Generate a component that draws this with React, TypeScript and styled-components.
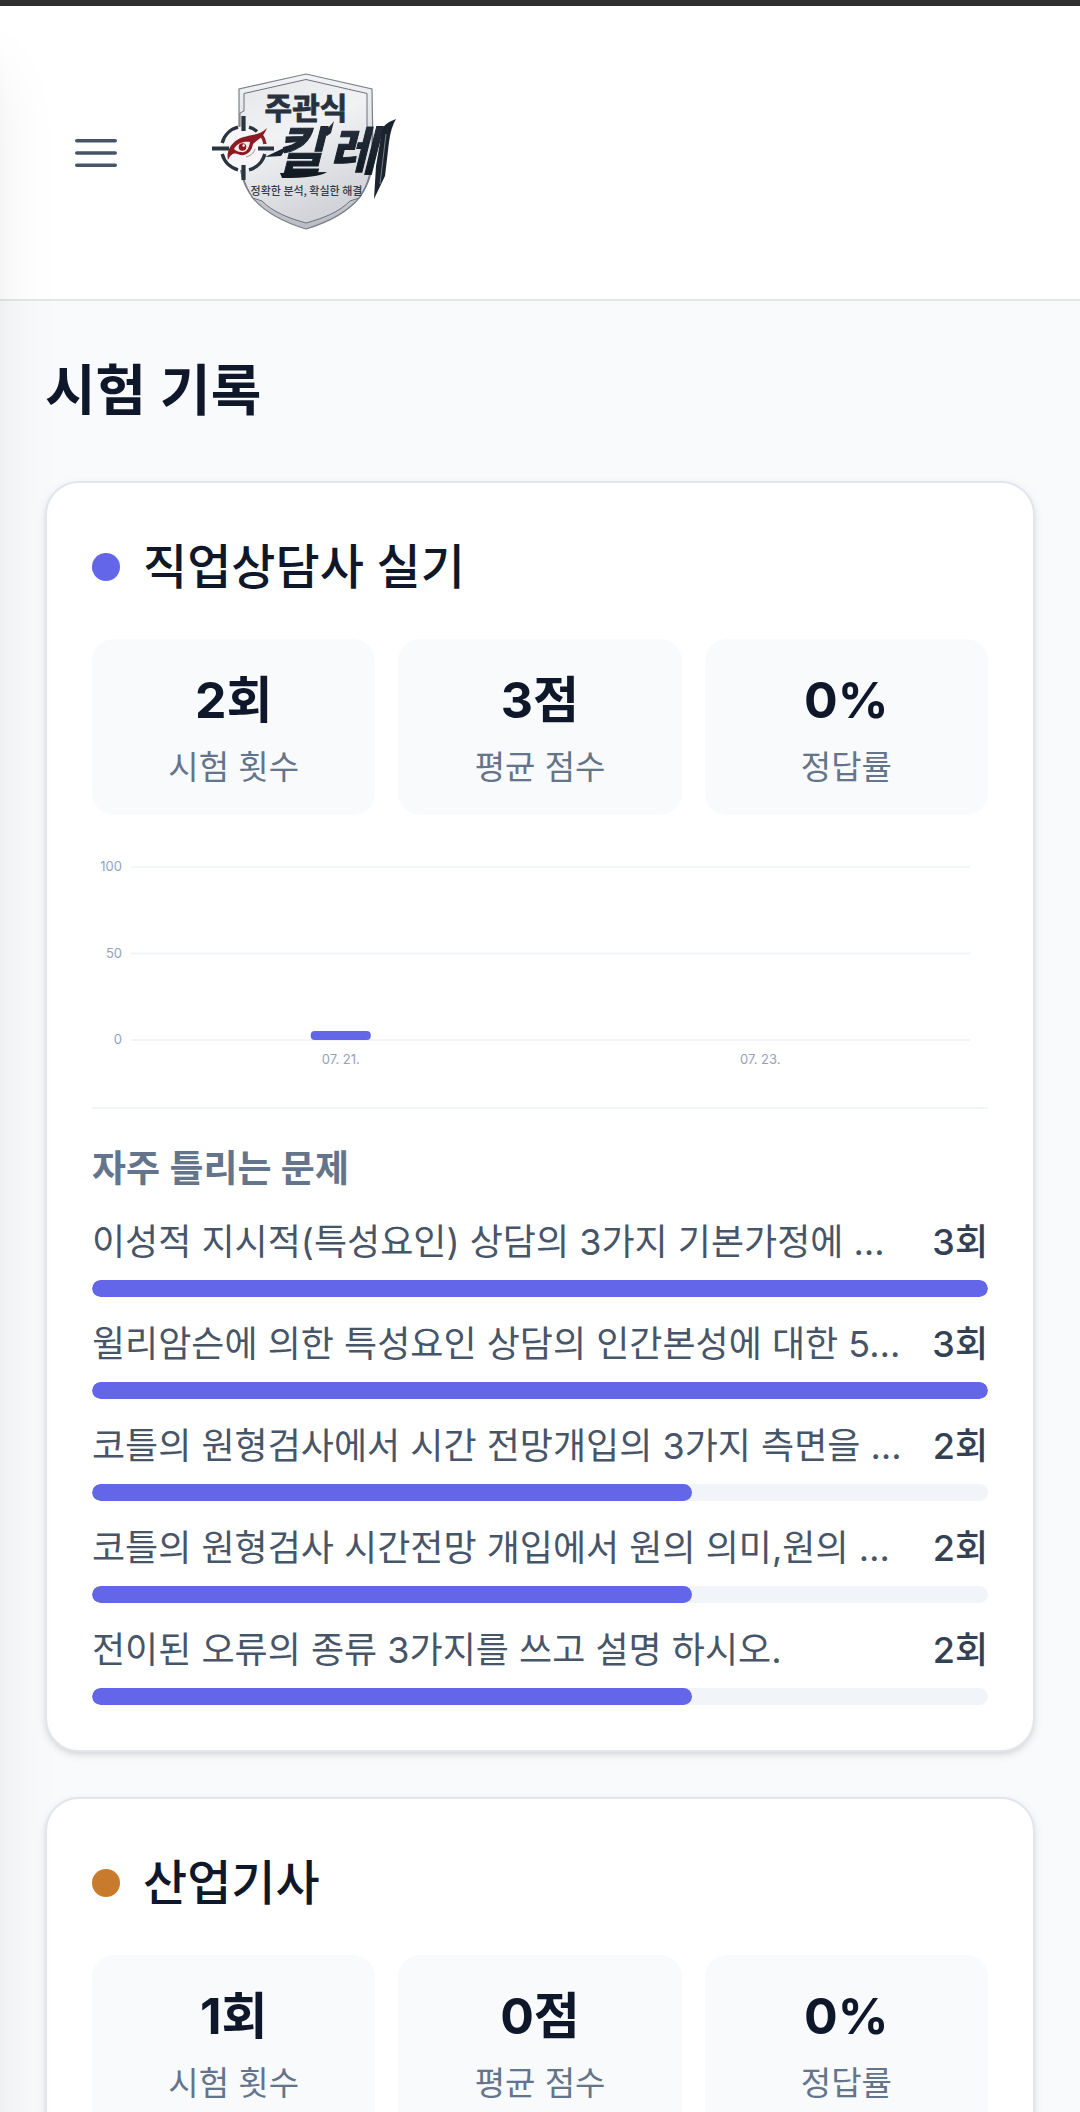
import React from "react";
import styled, { createGlobalStyle } from "styled-components";

const fontStack = `Inter, "Noto Sans CJK KR", sans-serif`;

const GlobalStyle = createGlobalStyle`
  *, *::before, *::after { box-sizing: border-box; }
  body {
    margin: 0;
    background: #f8fafc;
    color: #0f172a;
    font-family: ${fontStack};
  }
  h1, h2, h3, p, dl, dd, ul { margin: 0; padding: 0; }
`;

const Shell = styled.div`
  display: flex;
  flex-direction: column;
  height: 100vh;
  border-top: 6px solid #303030;
  overflow: hidden;
`;

const Drawer = styled.aside`
  position: fixed;
  top: 6px;
  bottom: -200px;
  left: 0;
  width: 720px;
  background: #ffffff;
  transform: translateX(-100%);
  box-shadow: 0 56px 70px -14px rgba(0, 0, 0, 0.1), 0 22px 28px -17px rgba(0, 0, 0, 0.1);
  z-index: 10;
  pointer-events: none;
`;

const Header = styled.header`
  display: flex;
  flex: none;
  align-items: center;
  gap: 22px;
  padding: 34px 45px;
  background: #ffffff;
  border-bottom: 2px solid #e2e6ea;
`;

const MenuButton = styled.button`
  display: flex;
  padding: 23px;
  border: 0;
  border-radius: 22px;
  background: transparent;
  color: #475569;
  cursor: pointer;
`;

const LogoLink = styled.a`
  display: block;
  width: 270px;
  height: 225px;
`;

const Main = styled.main`
  flex: 1;
  min-height: 0;
  padding: 45px;
  overflow-y: auto;
  scrollbar-width: none;
`;

const PageTitle = styled.h1`
  margin-bottom: 47px;
  font-size: 55px;
  line-height: 88px;
  font-weight: 600;
`;

const CardList = styled.div`
  display: flex;
  flex-direction: column;
  gap: 45px;
`;

const Card = styled.section`
  padding: 45px;
  background: #ffffff;
  border: 2px solid #e2e6ec;
  border-radius: 34px;
  box-shadow: 0 3px 8px rgba(0, 0, 0, 0.1), 0 3px 6px -3px rgba(0, 0, 0, 0.1);
`;

const CardHeader = styled.div`
  display: flex;
  align-items: center;
  gap: 23px;
  margin-bottom: 34px;
`;

const Dot = styled.span<{ $color: string }>`
  width: 28px;
  height: 28px;
  border-radius: 50%;
  background: ${(p) => p.$color};
`;

const CardTitle = styled.h2`
  font-size: 48px;
  line-height: 77px;
  font-weight: 500;
`;

const StatGrid = styled.dl`
  display: grid;
  grid-template-columns: repeat(3, 1fr);
  gap: 23px;
`;

const Stat = styled.div`
  display: flex;
  flex-direction: column-reverse;
  padding: 23px 23px 19px;
  border-radius: 22px;
  background: #f8fafc;
  text-align: center;
`;

const StatValue = styled.dd`
  font-size: 50px;
  line-height: 76px;
  font-weight: 700;
`;

const StatLabel = styled.dt`
  font-size: 33px;
  line-height: 58px;
  color: #64748b;
`;

const ChartBox = styled.div`
  margin: 23px 0;
  svg { display: block; width: 100%; height: auto; }
  text { font-family: ${fontStack}; font-size: 13px; fill: #94a3b8; }
`;

const Frequent = styled.div`
  padding-top: 30px;
  border-top: 2px solid #f1f5f9;
`;

const FrequentTitle = styled.h3`
  margin-bottom: 13px;
  font-size: 37px;
  line-height: 60px;
  font-weight: 600;
  color: #64748b;
`;

const QuestionList = styled.ul`
  display: flex;
  flex-direction: column;
  gap: 17px;
  list-style: none;
`;

const QuestionRow = styled.div`
  display: flex;
  justify-content: space-between;
  gap: 23px;
  margin-bottom: 8px;
  font-size: 36px;
  line-height: 60px;
`;

const QuestionText = styled.span`
  min-width: 0;
  overflow: hidden;
  text-overflow: ellipsis;
  white-space: nowrap;
  color: #475569;
`;

const QuestionCount = styled.span`
  flex: none;
  font-weight: 500;
  color: #334155;
`;

const Track = styled.div`
  height: 17px;
  border-radius: 9px;
  background: #f1f5f9;
  overflow: hidden;
`;

const Fill = styled.div`
  height: 100%;
  border-radius: 9px;
  background: #6366e8;
`;

function MenuIcon() {
  return (
    <svg width="56" height="56" viewBox="0 0 24 24" fill="none" stroke="currentColor" strokeWidth="1.5" strokeLinecap="round" aria-hidden="true">
      <path d="M3.75 6.75h16.5M3.75 12h16.5M3.75 17.25h16.5" />
    </svg>
  );
}

function Logo() {
  return (
    <svg width="270" height="225" viewBox="169 40 270 225" role="img" aria-label="주관식 킬레">
      <defs>
        <linearGradient id="shieldFace" x1="0" y1="0" x2="0.4" y2="1">
          <stop offset="0" stopColor="#e6e7ea" />
          <stop offset="0.45" stopColor="#f1f2f4" />
          <stop offset="1" stopColor="#d2d4d9" />
        </linearGradient>
        <linearGradient id="shieldRim" x1="0" y1="0" x2="0" y2="1">
          <stop offset="0" stopColor="#f3f4f6" />
          <stop offset="1" stopColor="#b9bcc2" />
        </linearGradient>
        <linearGradient id="ink" x1="0" y1="0" x2="0" y2="1">
          <stop offset="0" stopColor="#2b3542" />
          <stop offset="1" stopColor="#0d141d" />
        </linearGradient>
      </defs>
      <path d="M306 74L372 89L373 150C373 172 369 184 360 197C347 213 329 222 306 229C283 222 265 213 252 197C243 184 239 172 239 150V89Z" fill="url(#shieldRim)" stroke="#7b8088" strokeWidth="1.2" />
      <path d="M306 79.500L367 93.500V127H372V150C372 172 368 184 359 198L350 201C339 212 324 218 306 223C288 218 273 212 262 201L253 198C244 184 240 172 240 150V113L244 111V93.500Z" fill="url(#shieldFace)" stroke="#6d727b" strokeWidth="1" />
      <circle cx="243.500" cy="148.500" r="22" fill="#f6f6f8" />
      <g fill="none" stroke="#2a343f" strokeWidth="3.400">
        <path d="M238 127.200A22 22 0 0 0 222.200 143" />
        <path d="M222.200 154A22 22 0 0 0 238 169.800" />
        <path d="M249 169.800A22 22 0 0 0 264.800 154" />
        <path d="M249 127.200A22 22 0 0 1 257 131.500" />
        <path d="M261 134.500A22 22 0 0 1 265 144" stroke="#8e2027" />
      </g>
      <path d="M243.500 116V131M243.500 165V180M212 148.500H229M258 148.500H274" stroke="#2a343f" strokeWidth="4.200" />
      <path d="M267 128C263 138 257 140 253 144C252 151 247 156 240 155C235 153 232 152 228 160C226 151 231 144 237 140C246 134 259 137 267 128Z" fill="#8d1a22" />
      <path d="M234 149C237 143 244 141 250 142C249 149 246 153 241 152C238 152 235 150 234 149Z" fill="#f6e9e9" />
      <circle cx="242.500" cy="147" r="3.800" fill="#8d1a22" />
      <circle cx="243.700" cy="145.500" r="1.200" fill="#ffffff" />
      <path d="M246 157C250 156 254 153 255 149" fill="none" stroke="#9b6a6e" strokeWidth="0.800" />
      <text x="306" y="119" textAnchor="middle" fontFamily="Noto Sans CJK KR, sans-serif" fontSize="30" fontWeight="700" fill="#28323e" stroke="#28323e" strokeWidth="0.800">주관식</text>
      <text x="275 329" y="170" fontFamily="Noto Sans CJK KR, sans-serif" fontSize="52" fontWeight="700" fontStyle="italic" fill="url(#ink)" stroke="#19222d" strokeWidth="1">킬레</text>
      <path d="M396 119C388 122 384 125 382 130L376 166L374 199L385 176L389 142Q391 127 396 119Z" fill="#1a232e" />
      <path d="M386 134L380 184" stroke="#8d949d" strokeWidth="0.800" />
      <path d="M334 121C330 127 327 129 321 131L327 136L331 133Z" fill="#1f2935" />
      <path d="M288 146L265 157L281 156Z" fill="#1a232e" />
      <path d="M280 173L327 172Q318 178 282 178Z" fill="#111922" />
      <text x="306.500" y="195" textAnchor="middle" fontFamily="Noto Sans CJK KR, sans-serif" fontSize="11" fontWeight="500" fill="#333b46">정확한 분석, 확실한 해결</text>
    </svg>
  );
}

type Score = { date: string; score: number };
type Question = { text: string; count: number };

function ScoreChart({ scores }: { scores: Score[] }) {
  const left = 39;
  const right = 878;
  const base = 202;
  const span = 173;
  const slot = (right - left) / scores.length;
  return (
    <ChartBox>
      <svg viewBox="0 0 896 246" role="img" aria-label="시험 점수">
        {[100, 50, 0].map((v) => {
          const y = base - (v / 100) * span;
          return (
            <g key={v}>
              <line x1={left} x2={right} y1={y} y2={y} stroke="#f1f5f9" strokeWidth="2" />
              <text x={left - 9} y={y + 4} textAnchor="end">{v}</text>
            </g>
          );
        })}
        {scores.map((s, i) => {
          const cx = left + slot * (i + 0.5);
          const h = s.score > 0 ? Math.max(9, (s.score / 100) * span) : 0;
          return (
            <g key={s.date}>
              {h > 0 && <rect x={cx - 30} y={base - h} width="60" height={h} rx="4" fill="#6366e8" />}
              <text x={cx} y={base + 24} textAnchor="middle">{s.date}</text>
            </g>
          );
        })}
      </svg>
    </ChartBox>
  );
}

function FrequentMistakes({ questions }: { questions: Question[] }) {
  return (
    <Frequent>
      <FrequentTitle>자주 틀리는 문제</FrequentTitle>
      <QuestionList>
        {questions.map((q) => (
          <li key={q.text}>
            <QuestionRow>
              <QuestionText>{q.text}</QuestionText>
              <QuestionCount>{q.count}회</QuestionCount>
            </QuestionRow>
            <Track>
              <Fill style={{ width: `${Math.round((q.count / 3) * 100)}%` }} />
            </Track>
          </li>
        ))}
      </QuestionList>
    </Frequent>
  );
}

type Subject = {
  name: string;
  color: string;
  stats: [string, string][];
  scores?: Score[];
  questions?: Question[];
};

const subjects: Subject[] = [
  {
    name: "직업상담사 실기",
    color: "#6366e8",
    stats: [["시험 횟수", "2회"], ["평균 점수", "3점"], ["정답률", "0%"]],
    scores: [{ date: "07. 21.", score: 5 }, { date: "07. 23.", score: 0 }],
    questions: [
      { text: "이성적 지시적(특성요인) 상담의 3가지 기본가정에 …", count: 3 },
      { text: "윌리암슨에 의한 특성요인 상담의 인간본성에 대한 5…", count: 3 },
      { text: "코틀의 원형검사에서 시간 전망개입의 3가지 측면을 …", count: 2 },
      { text: "코틀의 원형검사 시간전망 개입에서 원의 의미,원의 …", count: 2 },
      { text: "전이된 오류의 종류 3가지를 쓰고 설명 하시오.", count: 2 },
    ],
  },
  {
    name: "산업기사",
    color: "#c97b2d",
    stats: [["시험 횟수", "1회"], ["평균 점수", "0점"], ["정답률", "0%"]],
  },
];

export default function App() {
  return (
    <>
      <GlobalStyle />
      <Shell>
        <Drawer aria-hidden="true" />
        <Header>
          <MenuButton type="button" aria-label="메뉴 열기">
            <MenuIcon />
          </MenuButton>
          <LogoLink href="#">
            <Logo />
          </LogoLink>
        </Header>
        <Main>
          <PageTitle>시험 기록</PageTitle>
          <CardList>
            {subjects.map((s) => (
              <Card key={s.name}>
                <CardHeader>
                  <Dot $color={s.color} />
                  <CardTitle>{s.name}</CardTitle>
                </CardHeader>
                <StatGrid>
                  {s.stats.map(([label, value]) => (
                    <Stat key={label}>
                      <StatLabel>{label}</StatLabel>
                      <StatValue>{value}</StatValue>
                    </Stat>
                  ))}
                </StatGrid>
                {s.scores && <ScoreChart scores={s.scores} />}
                {s.questions && <FrequentMistakes questions={s.questions} />}
              </Card>
            ))}
          </CardList>
        </Main>
      </Shell>
    </>
  );
}
